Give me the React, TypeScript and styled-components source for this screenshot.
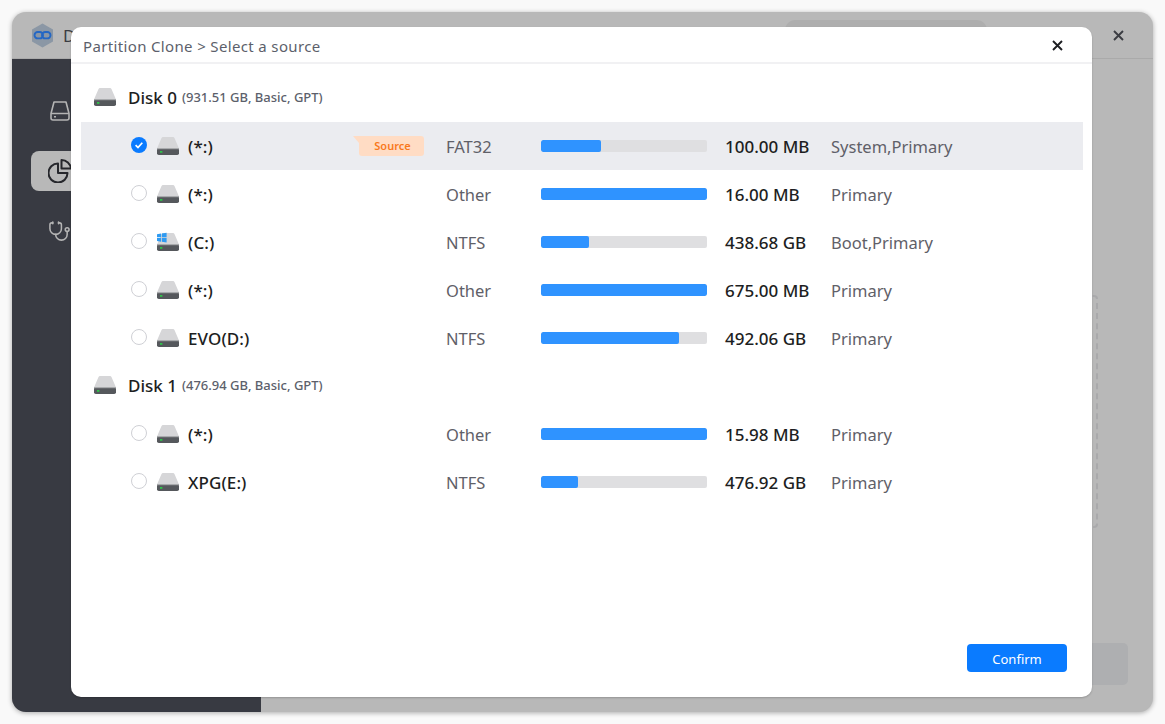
import React from "react";
import styled, { createGlobalStyle } from "styled-components";
import { Stethoscope } from "lucide-react";

const Global = createGlobalStyle`
  html, body { margin: 0; padding: 0; height: 100%; background: #f9f9f9; }
  * { box-sizing: border-box; }
  #root { font-family: "Noto Sans", "Open Sans", sans-serif; }
`;

const Page = styled.div`
  width: 1165px;
  height: 724px;
  padding: 12px;
  overflow: hidden;
`;
const Win = styled.div`
  position: relative;
  width: 1141px;
  height: 700px;
  border-radius: 14px;
  background: #b8b8b8;
  box-shadow: 0 1px 5px rgba(0, 0, 0, 0.32);
  display: flex;
  flex-direction: column;
  overflow: hidden;
`;
const TitleBar = styled.div`
  height: 47px;
  flex: none;
  display: flex;
  align-items: center;
  padding: 0 29px 0 19px;
  border-bottom: 1px solid #aaaaaa;
  color: #3a3c42;
  font-size: 17px;
`;
const AppName = styled.span`
  margin-left: 9px;
`;
const SearchTab = styled.div`
  width: 202px;
  height: 30px;
  margin-left: auto;
  margin-right: 126px;
  border-radius: 10px;
  background: #aeaeae;
`;
const Body = styled.div`
  flex: 1;
  display: flex;
  min-height: 0;
`;
const Sidebar = styled.nav`
  width: 249px;
  flex: none;
  background: #383a42;
  padding: 32px 0 0 19px;
  display: flex;
  flex-direction: column;
  gap: 20px;
`;
const NavItem = styled.div<{ $active?: boolean }>`
  width: 211px;
  height: 40px;
  border-radius: 8px;
  padding-left: 17px;
  display: flex;
  align-items: center;
  background: ${(p) => (p.$active ? "#b8b8b8" : "transparent")};
  color: ${(p) => (p.$active ? "#26272c" : "#b4b4b4")};
`;
const Content = styled.main`
  flex: 1;
  display: flex;
  flex-direction: column;
  align-items: flex-end;
  padding: 236px 25px 0 0;
`;
const DashedBox = styled.div`
  width: 500px;
  height: 233px;
  margin-right: 30px;
  border: 2px dashed #a9a9ab;
  border-radius: 4px;
`;
const GhostButton = styled.div`
  width: 120px;
  height: 42px;
  margin-top: 115px;
  border-radius: 5px;
  background: #aeafb1;
`;
const Modal = styled.div`
  position: absolute;
  left: 59px;
  top: 15px;
  width: 1021px;
  height: 670px;
  background: #fff;
  border-radius: 10px;
  box-shadow: 0 1px 2px rgba(0, 0, 0, 0.2);
  display: flex;
  flex-direction: column;
`;
const ModalHeader = styled.header`
  height: 37px;
  flex: none;
  padding: 3px 29px 0 12px;
  display: flex;
  align-items: center;
  justify-content: space-between;
  border-bottom: 2px solid #f1f1f3;
  color: #5c5f6b;
  font-size: 15px;
  letter-spacing: 0.35px;
`;
const CloseBtn = styled.span`
  display: flex;
  margin-top: -2px;
  color: #1d1e22;
`;
const List = styled.div`
  flex: 1;
  padding: 10px 9px 0 10px;
`;
const DiskRow = styled.div`
  height: 48px;
  display: flex;
  align-items: center;
  padding: 0 0 2px 13px;
`;
const DiskName = styled.span`
  margin-left: 12px;
  color: #1d1e22;
  font-size: 17px;
  font-weight: 500;
`;
const DiskMeta = styled.span`
  margin-left: 5px;
  color: #5c5f6b;
  font-size: 13px;
  font-weight: 500;
`;
const Row = styled.div<{ $selected?: boolean }>`
  height: 48px;
  display: flex;
  align-items: center;
  padding-left: 50px;
  background: ${(p) => (p.$selected ? "#ebecf0" : "transparent")};
`;
const Radio = styled.span`
  width: 16px;
  height: 16px;
  margin: -2px 10px 0 0;
  flex: none;
  border-radius: 50%;
  border: 1.5px solid #cfd0d5;
  background: #fff;
`;
const Checked = styled.svg`
  width: 16px;
  height: 16px;
  margin: -2px 10px 0 0;
  flex: none;
`;
const Name = styled.span`
  width: 166px;
  margin-left: 9px;
  flex: none;
  color: #1d1e22;
  font-size: 17px;
  font-weight: 500;
  letter-spacing: 0.1px;
`;
const BadgeSlot = styled.span`
  width: 70px;
  flex: none;
  display: flex;
  justify-content: flex-end;
`;
const Badge = styled.span`
  position: relative;
  width: 65px;
  height: 20px;
  border-radius: 0 3px 3px 3px;
  background: #ffdcc4;
  color: #f9791d;
  font-size: 11px;
  font-weight: 600;
  line-height: 20px;
  text-align: center;
  padding-left: 2px;
  &::before {
    content: "";
    position: absolute;
    left: -6px;
    top: 0;
    border-top: 7px solid #ffdcc4;
    border-left: 6px solid transparent;
  }
`;
const Fs = styled.span`
  width: 95px;
  margin-left: 22px;
  flex: none;
  color: #5f6068;
  font-size: 16.5px;
`;
const Track = styled.div`
  width: 166px;
  height: 12px;
  margin-top: -1px;
  flex: none;
  border-radius: 2px;
  background: #dfdfe1;
  overflow: hidden;
`;
const Fill = styled.div`
  height: 100%;
  border-radius: 2px;
  background: #2f93ff;
`;
const Size = styled.span`
  width: 106px;
  margin-left: 18px;
  flex: none;
  color: #1d1e22;
  font-size: 17px;
  font-weight: 500;
`;
const Kind = styled.span`
  color: #5f6068;
  font-size: 16.5px;
`;
const Footer = styled.footer`
  height: 53px;
  flex: none;
  padding-right: 25px;
  display: flex;
  justify-content: flex-end;
`;
const Confirm = styled.button`
  width: 100px;
  height: 28px;
  padding: 2px 0 0;
  border: 0;
  border-radius: 4px;
  background: #0a7bff;
  color: #fff;
  font-family: inherit;
  font-size: 13px;
`;

const DriveIcon = ({ win }: { win?: boolean }) => (
  <svg width="22" height="20" viewBox="0 0 22 20" style={{ flex: "none" }}>
    <path d="M4.4 2.2C4.7 1.4 5.6 1 6.4 1h9.2c.8 0 1.7.4 2 1.2L21.8 12H.2z" fill="#d6d6d8" />
    <rect x="0" y="12" width="22" height="7" rx="1.8" fill="#55585c" />
    <rect x="0" y="12" width="22" height="1.2" fill="#a9abad" />
    <rect x="3" y="15" width="2.4" height="1.8" fill="#2fc24a" />
    {win && (
      <path d="M0 2.2L4 1.6V5.3H0zM4.8 1.5L9.6.7V5.3H4.8zM0 6H4V9.7L0 9.1zM4.8 6H9.6V10.6L4.8 9.8z" fill="#2f9bf2" />
    )}
  </svg>
);

const CloseIcon = () => (
  <svg width="11" height="11" viewBox="0 0 11 11" style={{ display: "block" }}>
    <path d="M1 1l9 9M10 1l-9 9" stroke="currentColor" strokeWidth="1.9" fill="none" />
  </svg>
);

const Logo = () => (
  <svg width="23" height="25" viewBox="0 0 23 25">
    <path d="M11.5 .5l10.5 6v12L11.5 24.5 1 18.5v-12z" fill="#8b97a5" />
    <rect x="3.5" y="9" width="8.5" height="6.4" rx="3.2" fill="none" stroke="#2467c4" strokeWidth="1.9" />
    <rect x="11" y="9" width="8.5" height="6.4" rx="3.2" fill="none" stroke="#2467c4" strokeWidth="1.9" />
  </svg>
);

const SideDrive = () => (
  <svg width="20" height="20" viewBox="0 0 20 20" fill="none" stroke="currentColor" strokeWidth="1.6" style={{ marginLeft: 2 }}>
    <path d="M4 1h12l3 11.5V17a2 2 0 0 1-2 2H3a2 2 0 0 1-2-2v-4.5z" strokeLinejoin="round" />
    <path d="M1 12.5h18M4 15.8h2" />
  </svg>
);

const SidePie = () => (
  <svg width="24" height="24" viewBox="0 0 24 24" fill="none" stroke="currentColor" strokeWidth="2" strokeLinejoin="round">
    <path d="M10 4.5a9.5 9.5 0 1 0 9.5 9.5H10z" />
    <path d="M13.5 1v8.5H23A9.5 9.5 0 0 0 13.5 1z" />
  </svg>
);

type Part = { check?: boolean; win?: boolean; name: string; badge?: boolean; fs: string; pct: number; size: string; kind: string };

const disk0: Part[] = [
  { check: true, name: "(*:)", badge: true, fs: "FAT32", pct: 36, size: "100.00 MB", kind: "System,Primary" },
  { name: "(*:)", fs: "Other", pct: 100, size: "16.00 MB", kind: "Primary" },
  { win: true, name: "(C:)", fs: "NTFS", pct: 29, size: "438.68 GB", kind: "Boot,Primary" },
  { name: "(*:)", fs: "Other", pct: 100, size: "675.00 MB", kind: "Primary" },
  { name: "EVO(D:)", fs: "NTFS", pct: 83, size: "492.06 GB", kind: "Primary" },
];
const disk1: Part[] = [
  { name: "(*:)", fs: "Other", pct: 100, size: "15.98 MB", kind: "Primary" },
  { name: "XPG(E:)", fs: "NTFS", pct: 22, size: "476.92 GB", kind: "Primary" },
];

const PartRow = ({ p }: { p: Part }) => (
  <Row $selected={p.check}>
    {p.check ? (
      <Checked viewBox="0 0 16 16">
        <circle cx="8" cy="8" r="8" fill="#0a7bff" />
        <path d="M4.6 8.2l2.4 2.4 4.3-4.8" stroke="#fff" strokeWidth="1.7" fill="none" />
      </Checked>
    ) : (
      <Radio />
    )}
    <DriveIcon win={p.win} />
    <Name>{p.name}</Name>
    <BadgeSlot>{p.badge && <Badge>Source</Badge>}</BadgeSlot>
    <Fs>{p.fs}</Fs>
    <Track>
      <Fill style={{ width: `${p.pct}%` }} />
    </Track>
    <Size>{p.size}</Size>
    <Kind>{p.kind}</Kind>
  </Row>
);

export default function App() {
  return (
    <Page>
      <Global />
      <Win>
        <TitleBar>
          <Logo />
          <AppName>D</AppName>
          <SearchTab />
          <CloseIcon />
        </TitleBar>
        <Body>
          <Sidebar>
            <NavItem>
              <SideDrive />
            </NavItem>
            <NavItem $active>
              <SidePie />
            </NavItem>
            <NavItem>
              <Stethoscope size={23} strokeWidth={1.6} />
            </NavItem>
          </Sidebar>
          <Content>
            <DashedBox />
            <GhostButton />
          </Content>
        </Body>
        <Modal>
          <ModalHeader>
            <span>Partition Clone &gt; Select a source</span>
            <CloseBtn>
              <CloseIcon />
            </CloseBtn>
          </ModalHeader>
          <List>
            <DiskRow>
              <DriveIcon />
              <DiskName>Disk 0</DiskName>
              <DiskMeta>(931.51 GB, Basic, GPT)</DiskMeta>
            </DiskRow>
            {disk0.map((p, i) => (
              <PartRow key={i} p={p} />
            ))}
            <DiskRow>
              <DriveIcon />
              <DiskName>Disk 1</DiskName>
              <DiskMeta>(476.94 GB, Basic, GPT)</DiskMeta>
            </DiskRow>
            {disk1.map((p, i) => (
              <PartRow key={i} p={p} />
            ))}
          </List>
          <Footer>
            <Confirm>Confirm</Confirm>
          </Footer>
        </Modal>
      </Win>
    </Page>
  );
}
